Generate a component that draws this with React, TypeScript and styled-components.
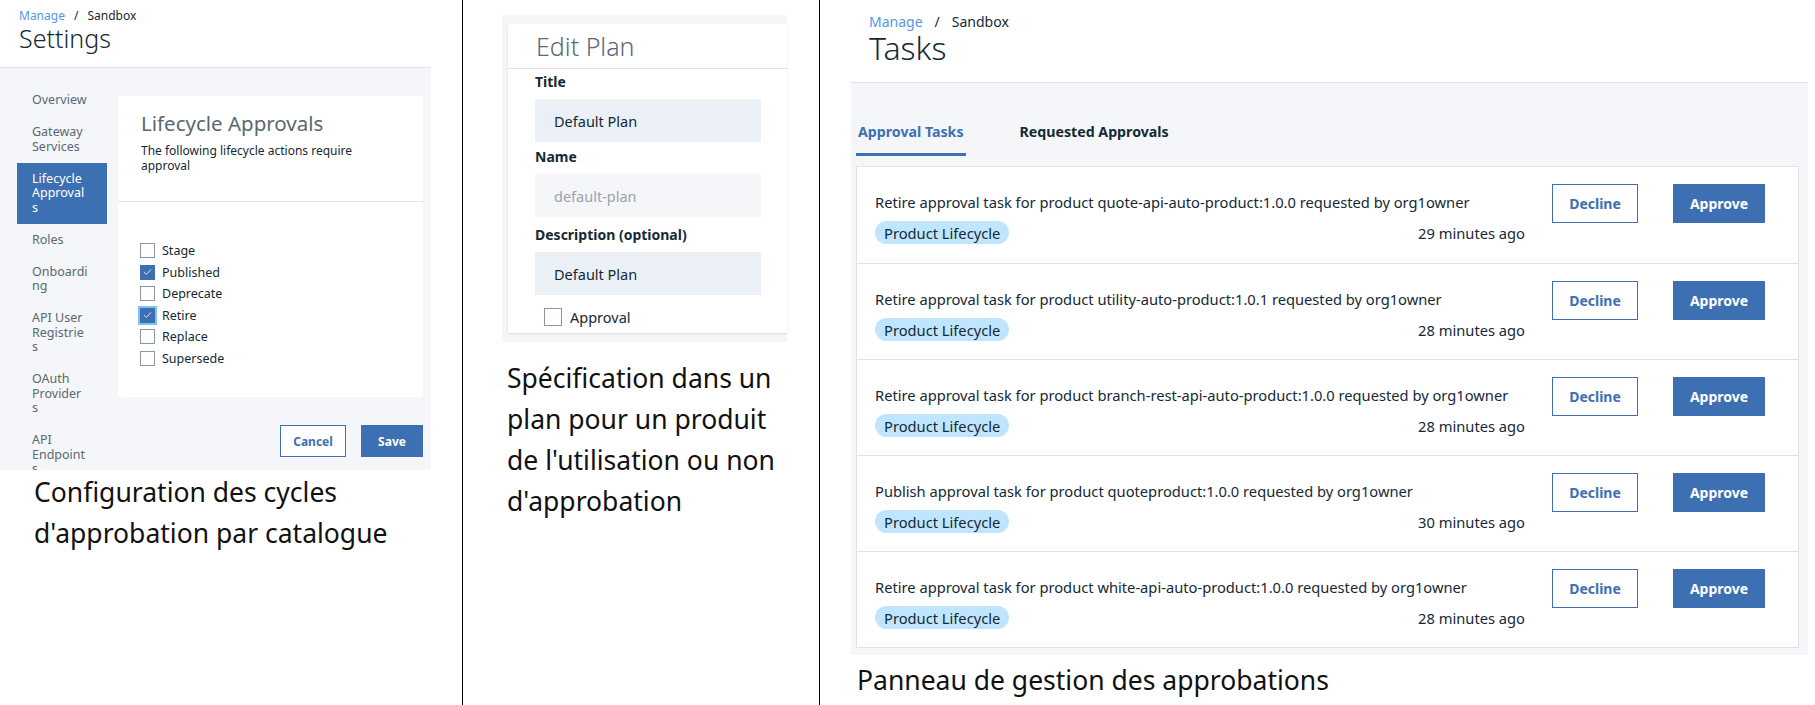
import React from 'react';
import styled, { createGlobalStyle } from 'styled-components';

const BLUE = '#3d70b2';
const TEXT = '#152935';
const MUTED = '#5a6872';
const LINE = '#dfe3e6';
const PANEL = '#f4f6f9';

const GlobalStyle = createGlobalStyle`
  html, body {
    margin: 0;
    padding: 0;
    background: #ffffff;
  }
  body {
    font-family: 'Noto Sans', 'Open Sans', sans-serif;
    color: ${TEXT};
  }
  * {
    box-sizing: border-box;
  }
`;

const Page = styled.div`
  display: flex;
  width: 1815px;
  height: 705px;
  overflow: hidden;
  background: #ffffff;
`;

const Column = styled.div<{ $width?: number; $divider?: boolean }>`
  flex: ${(p) => (p.$width ? `0 0 ${p.$width}px` : '1 1 auto')};
  height: 100%;
  border-right: ${(p) => (p.$divider ? '1px solid #000' : 'none')};
  overflow: hidden;
`;

const Caption = styled.div<{ $left: number; $top: number }>`
  padding-left: ${(p) => p.$left}px;
  margin-top: ${(p) => p.$top}px;
  font-size: 26.5px;
  line-height: 41px;
  color: #111;
`;

/* ---------- breadcrumb ---------- */

const Crumbs = styled.div<{ $size: number }>`
  font-size: ${(p) => p.$size}px;
  line-height: ${(p) => p.$size + 3}px;
  color: ${TEXT};
  display: flex;
  gap: ${(p) => (p.$size > 12 ? 12 : 9)}px;
`;

const CrumbLink = styled.span`
  color: #5596e6;
`;

const PageTitle = styled.h1<{ $size: number; $lh: number }>`
  margin: 0;
  font-size: ${(p) => p.$size}px;
  line-height: ${(p) => p.$lh}px;
  font-weight: 300;
  color: ${TEXT};
`;

/* ---------- settings screenshot ---------- */

const SettingsShot = styled.div`
  width: 431px;
  height: 470px;
  overflow: hidden;
`;

const SettingsHead = styled.div`
  height: 68px;
  padding: 8px 0 0 19px;
  border-bottom: 1px solid ${LINE};
`;

const SettingsBody = styled.div`
  height: 402px;
  background: ${PANEL};
  display: flex;
  align-items: flex-start;
  padding: 16px 8px 0 17px;
`;

const Nav = styled.ul`
  list-style: none;
  margin: 0;
  padding: 0;
  width: 90px;
  flex: none;
`;

const NavItem = styled.li<{ $active?: boolean }>`
  padding: 9px 0 8.5px 15px;
  font-size: 12.5px;
  line-height: 14.5px;
  color: ${(p) => (p.$active ? '#ffffff' : MUTED)};
  background: ${(p) => (p.$active ? BLUE : 'transparent')};
`;

const SettingsMain = styled.div`
  margin: 12px 0 0 11px;
  width: 305px;
`;

const Card = styled.div`
  background: #ffffff;
  height: 301px;
`;

const CardHead = styled.div`
  height: 106px;
  padding: 15px 0 0 23px;
  border-bottom: 1px solid ${LINE};
`;

const CardTitle = styled.h2`
  margin: 0;
  font-size: 20.5px;
  line-height: 24px;
  font-weight: 400;
  color: ${MUTED};
`;

const CardText = styled.p`
  margin: 8px 0 0;
  max-width: 230px;
  font-size: 12px;
  line-height: 15px;
  color: ${TEXT};
`;

const CheckList = styled.div`
  padding: 38px 0 0 22px;
`;

const CheckRow = styled.label`
  display: flex;
  align-items: center;
  gap: 7px;
  height: 21.5px;
  font-size: 12.5px;
  color: ${TEXT};
`;

const Box = styled.span<{ $checked?: boolean; $focus?: boolean; $size: number }>`
  display: inline-flex;
  align-items: center;
  justify-content: center;
  width: ${(p) => p.$size}px;
  height: ${(p) => p.$size}px;
  flex: none;
  border: 1px solid ${(p) => (p.$checked ? BLUE : '#8a96a0')};
  background: ${(p) => (p.$checked ? BLUE : '#ffffff')};
  box-shadow: ${(p) => (p.$focus ? '0 0 0 2px #7cc2f5' : 'none')};
`;

const Check = () => (
  <svg width="9" height="8" viewBox="0 0 9 8" fill="none">
    <polyline points="1,4.2 3.4,6.4 8,1.4" stroke="#dfe9f5" strokeWidth="1" />
  </svg>
);

const ButtonRow = styled.div`
  display: flex;
  justify-content: flex-end;
  gap: 15px;
  margin-top: 28px;
`;

const Button = styled.button<{ $primary?: boolean; $w: number; $h: number; $size: number }>`
  width: ${(p) => p.$w}px;
  height: ${(p) => p.$h}px;
  padding: 0;
  font-family: inherit;
  font-size: ${(p) => p.$size}px;
  font-weight: 700;
  border: 1px solid ${BLUE};
  color: ${(p) => (p.$primary ? '#ffffff' : BLUE)};
  background: ${(p) => (p.$primary ? BLUE : '#ffffff')};
  cursor: pointer;
`;

/* ---------- edit plan screenshot ---------- */

const PlanShot = styled.div`
  margin: 15px 0 0 39px;
  width: 285px;
  height: 327px;
  background: ${PANEL};
  padding: 9px 0 9px 6px;
`;

const PlanCard = styled.div`
  height: 309px;
  background: #ffffff;
  box-shadow: 0 1px 2px rgba(0, 0, 0, 0.12);
`;

const PlanHead = styled.div`
  height: 45px;
  padding-left: 28px;
  border-bottom: 1px solid ${LINE};
  font-size: 25px;
  line-height: 44px;
  font-weight: 300;
  color: ${MUTED};
`;

const PlanBody = styled.div`
  padding: 4px 0 0 27px;
`;

const FieldLabel = styled.div<{ $gap: number }>`
  margin-top: ${(p) => p.$gap}px;
  font-size: 14px;
  line-height: 18px;
  font-weight: 700;
  color: ${TEXT};
`;

const Field = styled.div<{ $readOnly?: boolean }>`
  margin-top: 8px;
  width: 226px;
  height: 43px;
  padding-left: 19px;
  display: flex;
  align-items: center;
  font-size: 14.5px;
  color: ${(p) => (p.$readOnly ? '#9aa3ab' : TEXT)};
  background: ${(p) => (p.$readOnly ? '#f4f6f9' : '#ebeff6')};
`;

const PlanCheck = styled.label`
  display: flex;
  align-items: center;
  gap: 8px;
  margin: 12px 0 0 9px;
  font-size: 14.5px;
  color: ${TEXT};
`;

/* ---------- tasks screenshot ---------- */

const TasksHead = styled.div`
  margin-left: 31px;
  width: 957px;
  height: 83px;
  padding: 13px 0 0 18px;
  border-bottom: 1px solid ${LINE};
`;

const TasksBody = styled.div`
  margin-left: 31px;
  width: 957px;
  height: 572px;
  background: ${PANEL};
  padding: 28px 0 0 5px;
`;

const Tabs = styled.div`
  display: flex;
  gap: 52px;
`;

const Tab = styled.div<{ $active?: boolean }>`
  padding: 12px 2px 12px;
  font-size: 14.2px;
  line-height: 18px;
  font-weight: 700;
  color: ${(p) => (p.$active ? BLUE : TEXT)};
  border-bottom: 3px solid ${(p) => (p.$active ? BLUE : 'transparent')};
`;

const TaskList = styled.div`
  margin-top: 10px;
  width: 943px;
  background: #ffffff;
  border: 1px solid ${LINE};
`;

const TaskRow = styled.div`
  display: flex;
  align-items: flex-start;
  height: 96px;
  padding: 17px 0 0 18px;
  & + & {
    border-top: 1px solid ${LINE};
  }
`;

const TaskInfo = styled.div`
  width: 650px;
  flex: none;
`;

const TaskTitle = styled.div`
  font-size: 14.7px;
  line-height: 37px;
  color: ${TEXT};
`;

const TaskMeta = styled.div`
  display: flex;
  justify-content: space-between;
  align-items: center;
  font-size: 14.7px;
  color: ${TEXT};
`;

const Tag = styled.span`
  display: inline-flex;
  align-items: center;
  height: 23px;
  padding: 0 9px;
  border-radius: 12px;
  background: #c0e6ff;
  font-size: 14.7px;
  color: ${TEXT};
`;

const TaskActions = styled.div`
  display: flex;
  gap: 35px;
  margin-left: 27px;
`;

const navItems: { lines: string[]; active?: boolean }[] = [
  { lines: ['Overview'] },
  { lines: ['Gateway', 'Services'] },
  { lines: ['Lifecycle', 'Approval', 's'], active: true },
  { lines: ['Roles'] },
  { lines: ['Onboardi', 'ng'] },
  { lines: ['API User', 'Registrie', 's'] },
  { lines: ['OAuth', 'Provider', 's'] },
  { lines: ['API', 'Endpoint', 's'] },
];

const lifecycle = [
  { label: 'Stage' },
  { label: 'Published', checked: true },
  { label: 'Deprecate' },
  { label: 'Retire', checked: true, focus: true },
  { label: 'Replace' },
  { label: 'Supersede' },
];

const tasks = [
  { text: 'Retire approval task for product quote-api-auto-product:1.0.0 requested by org1owner', when: '29 minutes ago' },
  { text: 'Retire approval task for product utility-auto-product:1.0.1 requested by org1owner', when: '28 minutes ago' },
  { text: 'Retire approval task for product branch-rest-api-auto-product:1.0.0 requested by org1owner', when: '28 minutes ago' },
  { text: 'Publish approval task for product quoteproduct:1.0.0 requested by org1owner', when: '30 minutes ago' },
  { text: 'Retire approval task for product white-api-auto-product:1.0.0 requested by org1owner', when: '28 minutes ago' },
];

const App = () => (
  <>
    <GlobalStyle />
    <Page>
      <Column $width={463} $divider>
        <SettingsShot>
          <SettingsHead>
            <Crumbs $size={12}>
              <CrumbLink>Manage</CrumbLink>
              <span>/</span>
              <span>Sandbox</span>
            </Crumbs>
            <PageTitle $size={25} $lh={30}>Settings</PageTitle>
          </SettingsHead>
          <SettingsBody>
            <Nav>
              {navItems.map((item) => (
                <NavItem key={item.lines.join('')} $active={item.active}>
                  {item.lines.map((line, i) => (
                    <React.Fragment key={line}>
                      {i > 0 && <br />}
                      {line}
                    </React.Fragment>
                  ))}
                </NavItem>
              ))}
            </Nav>
            <SettingsMain>
              <Card>
                <CardHead>
                  <CardTitle>Lifecycle Approvals</CardTitle>
                  <CardText>The following lifecycle actions require approval</CardText>
                </CardHead>
                <CheckList>
                  {lifecycle.map((c) => (
                    <CheckRow key={c.label}>
                      <Box $size={15} $checked={c.checked} $focus={c.focus}>
                        {c.checked && <Check />}
                      </Box>
                      {c.label}
                    </CheckRow>
                  ))}
                </CheckList>
              </Card>
              <ButtonRow>
                <Button $w={66} $h={32} $size={12}>Cancel</Button>
                <Button $w={62} $h={32} $size={12} $primary>Save</Button>
              </ButtonRow>
            </SettingsMain>
          </SettingsBody>
        </SettingsShot>
        <Caption $left={34} $top={2}>
          Configuration des cycles
          <br />
          d'approbation par catalogue
        </Caption>
      </Column>

      <Column $width={357} $divider>
        <PlanShot>
          <PlanCard>
            <PlanHead>Edit Plan</PlanHead>
            <PlanBody>
              <FieldLabel $gap={0}>Title</FieldLabel>
              <Field>Default Plan</Field>
              <FieldLabel $gap={6}>Name</FieldLabel>
              <Field $readOnly>default-plan</Field>
              <FieldLabel $gap={9}>Description (optional)</FieldLabel>
              <Field>Default Plan</Field>
              <PlanCheck>
                <Box $size={18} />
                Approval
              </PlanCheck>
            </PlanBody>
          </PlanCard>
        </PlanShot>
        <Caption $left={44} $top={16}>
          Spécification dans un
          <br />
          plan pour un produit
          <br />
          de l'utilisation ou non
          <br />
          d'approbation
        </Caption>
      </Column>

      <Column>
        <TasksHead>
          <Crumbs $size={14}>
            <CrumbLink>Manage</CrumbLink>
            <span>/</span>
            <span>Sandbox</span>
          </Crumbs>
          <PageTitle $size={32} $lh={36}>Tasks</PageTitle>
        </TasksHead>
        <TasksBody>
          <Tabs>
            <Tab $active>Approval Tasks</Tab>
            <Tab>Requested Approvals</Tab>
          </Tabs>
          <TaskList>
            {tasks.map((t) => (
              <TaskRow key={t.text}>
                <TaskInfo>
                  <TaskTitle>{t.text}</TaskTitle>
                  <TaskMeta>
                    <Tag>Product Lifecycle</Tag>
                    <span>{t.when}</span>
                  </TaskMeta>
                </TaskInfo>
                <TaskActions>
                  <Button $w={86} $h={39} $size={14}>Decline</Button>
                  <Button $w={92} $h={39} $size={14} $primary>Approve</Button>
                </TaskActions>
              </TaskRow>
            ))}
          </TaskList>
        </TasksBody>
        <Caption $left={37} $top={5}>
          Panneau de gestion des approbations
        </Caption>
      </Column>
    </Page>
  </>
);

export default App;
